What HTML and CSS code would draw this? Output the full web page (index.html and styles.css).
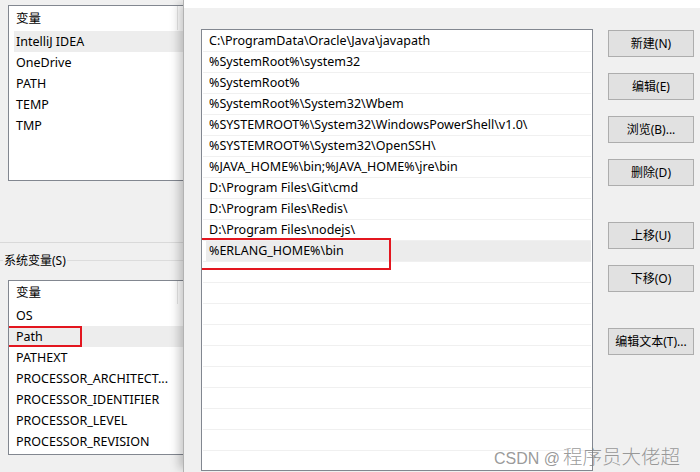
FILE: index.html
```html
<!DOCTYPE html>
<html lang="zh-CN">
<head>
<meta charset="utf-8">
<title>编辑环境变量</title>
<link rel="stylesheet" href="styles.css">
</head>
<body>
<div class="screen">
  <div class="bgwin">
    <div class="lv lv-top">
      <div class="lv-head"><span>变量</span><i class="col-div"></i></div>
      <div class="lv-row sel inset">IntelliJ IDEA</div>
      <div class="lv-row">OneDrive</div>
      <div class="lv-row">PATH</div>
      <div class="lv-row">TEMP</div>
      <div class="lv-row">TMP</div>
    </div>
    <div class="sep"></div>
    <div class="group-head">
      <span class="gl gl-short"></span>
      <span class="group-label">系统变量(S)</span>
      <span class="gl gl-long"></span>
    </div>
    <div class="lv lv-bottom">
      <div class="lv-head short"><span>变量</span><i class="col-div"></i></div>
      <div class="lv-row">OS</div>
      <div class="lv-row sel marked">Path<span class="mark mark-left"></span></div>
      <div class="lv-row">PATHEXT</div>
      <div class="lv-row">PROCESSOR_ARCHITECT...</div>
      <div class="lv-row">PROCESSOR_IDENTIFIER</div>
      <div class="lv-row">PROCESSOR_LEVEL</div>
      <div class="lv-row">PROCESSOR_REVISION</div>
    </div>
  </div>

  <div class="dialog">
    <div class="title-strip"></div>
    <div class="dlg-body">
      <div class="pathlist">
        <div class="p-row">C:\ProgramData\Oracle\Java\javapath</div>
        <div class="p-row">%SystemRoot%\system32</div>
        <div class="p-row">%SystemRoot%</div>
        <div class="p-row">%SystemRoot%\System32\Wbem</div>
        <div class="p-row">%SYSTEMROOT%\System32\WindowsPowerShell\v1.0\</div>
        <div class="p-row">%SYSTEMROOT%\System32\OpenSSH\</div>
        <div class="p-row">%JAVA_HOME%\bin;%JAVA_HOME%\jre\bin</div>
        <div class="p-row">D:\Program Files\Git\cmd</div>
        <div class="p-row">D:\Program Files\Redis\</div>
        <div class="p-row">D:\Program Files\nodejs\</div>
        <div class="p-row edit"><span class="edit-field">%ERLANG_HOME%\bin</span><span class="mark mark-mid"></span></div>
        <div class="p-row"></div>
        <div class="p-row"></div>
        <div class="p-row"></div>
        <div class="p-row"></div>
        <div class="p-row"></div>
        <div class="p-row"></div>
        <div class="p-row"></div>
        <div class="p-row"></div>
        <div class="p-row"></div>
        <div class="p-row"></div>
        <div class="p-row"></div>
      </div>
      <div class="btns">
        <div class="btn">新建(N)</div>
        <div class="btn">编辑(E)</div>
        <div class="btn">浏览(B)...</div>
        <div class="btn">删除(D)</div>
        <div class="btn far">上移(U)</div>
        <div class="btn">下移(O)</div>
        <div class="btn far">编辑文本(T)...</div>
      </div>
    </div>
  </div>

  <div class="watermark"><span class="wm-latin">CSDN @</span><span class="wm-cjk">程序员大佬超</span></div>
</div>
</body>
</html>
```

FILE: styles.css
```css
* { box-sizing: border-box; }

html, body {
  margin: 0;
  padding: 0;
  background: #f0f0f0;
}

body {
  font-family: "Noto Sans", "Noto Sans CJK SC", sans-serif;
  font-size: 12.5px;
  color: #000;
}

.screen {
  position: relative;
  width: 700px;
  height: 472px;
  overflow: hidden;
  display: flex;
  background: #f0f0f0;
}

/* ---------- background window (left) ---------- */
.bgwin {
  width: 183px;
  flex: none;
  overflow: hidden;
  padding-top: 5px;
  background: #f0f0f0;
}

.lv {
  width: 220px;
  margin-left: 8px;
  background: #fff;
  border: 1px solid #828790;
  overflow: hidden;
}

.lv-top { height: 176px; }
.lv-bottom { height: 175px; margin-top: 10px; }

.lv-head {
  position: relative;
  height: 25px;
  line-height: 25px;
  padding-left: 7px;
}
.lv-head.short { height: 24px; line-height: 24px; }

.col-div {
  position: absolute;
  left: 168px;
  top: 0;
  bottom: 1px;
  width: 1px;
  background: #e5e5e5;
}

.lv-row {
  height: 21px;
  line-height: 21px;
  padding-left: 7px;
  white-space: nowrap;
}

.lv-row.sel { background: #ededed; }
.lv-row.inset { margin-left: 5px; padding-left: 2px; }
.lv-row.marked { position: relative; }

.sep {
  height: 1px;
  margin-top: 61px;
  background: #d9d9d9;
}

.group-head {
  display: flex;
  align-items: center;
  height: 19px;
  margin-top: 8px;
}

.gl { height: 1px; background: #dcdcdc; }
.gl-short { width: 3px; flex: none; }
.gl-long { flex: 1; margin-left: 1px; }

.group-label {
  padding-left: 1px;
  font-size: 12px;
  line-height: 19px;
  white-space: nowrap;
}

/* ---------- red annotation boxes ---------- */
.mark {
  position: absolute;
  border: 2px solid #e3161f;
  pointer-events: none;
}

.mark-left {
  left: -4px;
  top: 0;
  width: 77px;
  height: 21px;
}

.mark-mid {
  left: -6px;
  top: -3px;
  width: 194px;
  height: 32px;
}

/* ---------- dialog ---------- */
.dialog {
  position: relative;
  z-index: 1;
  flex: 1;
  border-left: 1px solid #b2b2b2;
  box-shadow: -7px 0 9px -3px rgba(0, 0, 0, 0.22);
  background: #f0f0f0;
}

.title-strip {
  height: 8px;
  background: #fff;
}

.dlg-body {
  display: flex;
  padding: 21px 0 0 17px;
}

.pathlist {
  width: 392px;
  height: 442px;
  flex: none;
  background: #fff;
  border: 1px solid #828790;
  padding-top: 1px;
  overflow: hidden;
}

.p-row {
  position: relative;
  display: flex;
  height: 21px;
  line-height: 20px;
  margin: 0 1px;
  padding-left: 6px;
  border-bottom: 1px solid #f0f0f0;
  white-space: nowrap;
}

.p-row.edit { padding-left: 3px; }

.edit-field {
  flex: 1;
  padding-left: 3px;
  background: #ececec;
}

.btns {
  display: flex;
  flex-direction: column;
  gap: 16px;
  margin-left: 15px;
  margin-top: 1px;
}

.btn {
  width: 86px;
  height: 27px;
  line-height: 25px;
  text-align: center;
  background: #e1e1e1;
  border: 1px solid #adadad;
  font-size: 12px;
  white-space: nowrap;
}

.btn.far { margin-top: 20px; }

/* ---------- watermark ---------- */
.watermark {
  position: absolute;
  z-index: 5;
  left: 494px;
  top: 441px;
  display: flex;
  align-items: baseline;
  color: rgba(128, 128, 128, 0.8);
  white-space: nowrap;
  pointer-events: none;
}

.wm-latin {
  font-family: "Liberation Sans", sans-serif;
  font-size: 16px;
}

.wm-cjk {
  font-family: "Noto Sans CJK SC", sans-serif;
  font-size: 19.5px;
  font-weight: 300;
  margin-left: 3px;
}
```
